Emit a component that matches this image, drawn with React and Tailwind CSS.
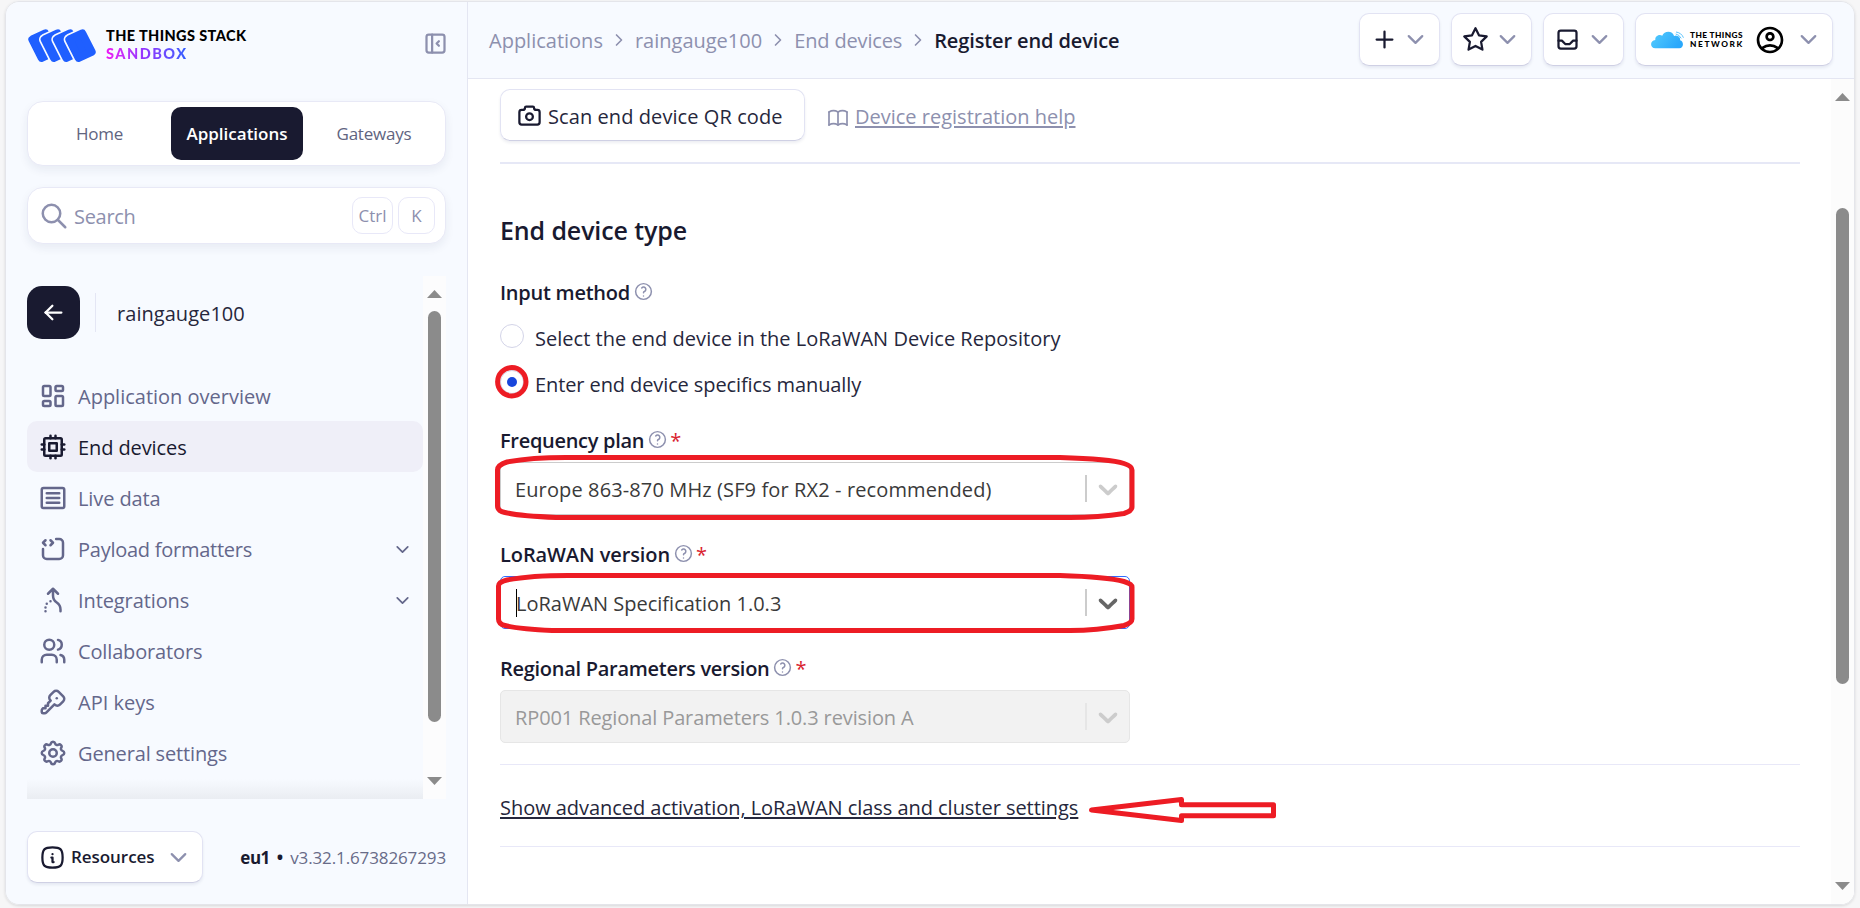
import React from "react";
import {
  TbLayoutDashboard,
  TbCpu,
  TbSourceCode,
  TbUsers,
  TbKey,
  TbSettings,
  TbLayoutSidebarLeftCollapse,
  TbSearch,
  TbInfoSquareRounded,
  TbPlus,
  TbStar,
  TbInbox,
  TbChevronDown,
  TbChevronRight,
  TbCamera,
  TbBook,
  TbHelp,
  TbArrowLeft,
} from "react-icons/tb";
import { MdOutlineAccountCircle } from "react-icons/md";

const TILE = "124,31 163,13 191,68 152,86";

function StackLogo() {
  return (
    <svg viewBox="0 0 204 98" className="h-[33px] w-[68px] shrink-0">
      {[-111, -74, -37, 0].map((dx) => (
        <g key={dx} transform={`translate(${dx} 0)`} strokeLinejoin="round">
          {dx > -111 && <polygon points={TILE} fill="#f7faff" stroke="#f7faff" strokeWidth="34" />}
          <polygon points={TILE} fill="#1f5fff" stroke="#1f5fff" strokeWidth="24" />
        </g>
      ))}
    </svg>
  );
}

function CloudLogo() {
  return (
    <svg viewBox="0 0 100 54" className="h-[18px] w-[33px] shrink-0">
      <defs>
        <linearGradient id="cloud" x1="0" x2="1" y1="0" y2="0.4">
          <stop offset="0" stopColor="#55cdfd" />
          <stop offset="1" stopColor="#2aa8fb" />
        </linearGradient>
      </defs>
      <path
        fill="url(#cloud)"
        d="M13 52C-4 52-4 28 13 27C12 14 26 9 34 14C40-2 66-2 70 15C82 12 90 19 88 28C101 31 99 52 86 52Z"
      />
      <path
        fill="none"
        stroke="#41bafc"
        strokeWidth="2.6"
        strokeLinecap="round"
        d="M77 3Q92 5 98 19M76 9Q86 11 91 21M76 15Q82 16 84 21"
      />
    </svg>
  );
}

function LiveDataIcon() {
  return (
    <svg viewBox="0 0 24 24" fill="none" stroke="currentColor" strokeWidth="2" strokeLinecap="round" strokeLinejoin="round" className="size-[30px]">
      <rect x="3" y="4" width="18" height="16" rx="1.4" />
      <path d="M7 8.2h10M7 12h10M7 15.8h10" />
    </svg>
  );
}

function MergeIcon() {
  return (
    <svg viewBox="0 0 24 24" fill="none" stroke="currentColor" strokeWidth="2" strokeLinecap="round" strokeLinejoin="round" className="size-[30px]">
      <path d="M16 7l-4 -4l-4 4M6 21v.01M6 18.01v.01M7 15.02v.01M10 13.03v.01M12 3v5.394a6.737 6.737 0 0 0 3 5.606a6.737 6.737 0 0 1 3 5.606v1.394" />
    </svg>
  );
}

const NAV = [
  { label: "Application overview", icon: <TbLayoutDashboard size={30} /> },
  { label: "End devices", icon: <TbCpu size={30} />, active: true, track: "tracking-[-0.1px]" },
  { label: "Live data", icon: <LiveDataIcon />, track: "tracking-[-0.1px]" },
  { label: "Payload formatters", icon: <TbSourceCode size={30} />, more: true, track: "tracking-[-0.25px]" },
  { label: "Integrations", icon: <MergeIcon />, more: true, track: "tracking-[-0.1px]" },
  { label: "Collaborators", icon: <TbUsers size={30} />, track: "tracking-[-0.15px]" },
  { label: "API keys", icon: <TbKey size={30} /> },
  { label: "General settings", icon: <TbSettings size={30} />, track: "tracking-[-0.15px]" },
];

function Triangle({ down }) {
  return (
    <svg viewBox="0 0 15 8" className={`h-2 w-[15px] shrink-0 ${down ? "rotate-180" : ""}`}>
      <path d="M0 8L7.5 0L15 8Z" fill="#8b8b8b" />
    </svg>
  );
}

function Sidebar() {
  return (
    <aside className="flex w-[462px] shrink-0 flex-col border-r border-[#e4e6f2] bg-[#f7faff] pl-[21px]">
      <div className="mt-[26px] flex h-[34px] w-[418px] items-center">
        <div className="ml-px"><StackLogo /></div>
        <div className="ml-[10px] flex flex-col font-[Lato] text-[14.5px] font-black">
          <span className="h-[18px] leading-[18px] tracking-[0.4px] text-black">THE THINGS STACK</span>
          <span className="h-[18px] w-[83px] bg-gradient-to-r from-[#ee10f5] via-[#8a35ff] to-[#1f5fff] bg-clip-text leading-[18px] tracking-[1.5px] text-transparent">
            SANDBOX
          </span>
        </div>
        <TbLayoutSidebarLeftCollapse size={27} className="mb-[3px] ml-auto -mr-[4px] text-[#8d90ae]" />
      </div>

      <nav className="mt-[39px] flex h-[65px] w-[419px] items-center rounded-[16px] border border-[#e8e9f6] bg-white text-[17px] text-[#61647f] shadow-[0_4px_10px_rgba(30,40,90,0.07)]">
        <span className="w-[143px] pt-px text-center tracking-[-0.2px]">Home</span>
        <span className="flex h-[53px] w-[132px] items-center justify-center rounded-[10px] bg-[#191a30] pt-px font-semibold text-white">
          Applications
        </span>
        <span className="w-[142px] pt-px text-center tracking-[-0.2px]">Gateways</span>
      </nav>

      <div className="mt-[21px] flex h-[57px] w-[419px] items-center rounded-[16px] border border-[#e8e9f6] bg-white pr-[10px] pl-[11px] text-[#8d90ae] shadow-[0_4px_10px_rgba(30,40,90,0.07)]">
        <TbSearch size={30} />
        <span className="ml-[5px] pt-[3px] text-[20px] tracking-[-0.3px]">Search</span>
        <span className="ml-auto flex h-[37px] w-[41px] items-center justify-center rounded-[10px] border border-[#e8e8f8] pt-px text-[17px]">Ctrl</span>
        <span className="ml-[5px] flex h-[37px] w-[37px] items-center justify-center rounded-[10px] border border-[#e8e8f8] pt-px text-[17px]">K</span>
      </div>

      <div className="mt-[32px] flex h-[523px] w-[419px]">
        <div className="relative flex w-[396px] flex-col pt-[10px]">
          <div className="flex h-[53px] items-center">
            <span className="flex size-[53px] items-center justify-center rounded-[15px] bg-[#191a30] text-white">
              <TbArrowLeft size={27} />
            </span>
            <span className="ml-[15px] h-[39px] w-px bg-[#e4e6f4]" />
            <span className="ml-[21px] pt-[2px] text-[20px] tracking-[0.05px] text-[#26273c]">raingauge100</span>
          </div>
          <div className="mt-[31px] flex flex-col">
            {NAV.map((n) => (
              <div
                key={n.label}
                className={`flex h-[51px] items-center rounded-[10px] pt-px pl-[11px] ${n.active ? "bg-[#efeff8] text-[#191a30]" : "text-[#64678b]"}`}
              >
                {n.icon}
                <span className={`ml-[10px] pt-[2px] text-[20px] ${n.track ?? ""}`}>{n.label}</span>
                {n.more && <TbChevronDown size={21} className="mr-[10px] ml-auto" />}
              </div>
            ))}
          </div>
          <div className="absolute inset-x-0 bottom-0 h-5 bg-gradient-to-t from-[#eaedf2] to-[#f7faff]" />
        </div>
        <div className="flex w-[23px] flex-col items-center bg-[#fcfcfd] pt-[14px] pb-[14px]">
          <Triangle />
          <span className="mt-[13px] h-[411px] w-[13px] rounded-full bg-[#8b8b8b]" />
          <span className="mt-auto flex"><Triangle down /></span>
        </div>
      </div>

      <div className="mt-8 flex h-[52px] w-[419px] items-center">
        <span className="flex h-[52px] w-[176px] items-center rounded-[10px] border border-[#e2e3f3] border-b-[#cfd0e4] bg-white pl-[11px] shadow-[0_2px_3px_rgba(30,40,90,0.08)]">
          <TbInfoSquareRounded size={27} className="text-[#191a30]" />
          <span className="ml-[5px] text-[17px] font-semibold tracking-[-0.05px] text-[#191a30]">Resources</span>
          <TbChevronDown size={27} className="ml-[10px] text-[#8d90ae]" />
        </span>
        <span className="ml-auto flex items-baseline pt-[2px] text-[17px]">
          <b className="tracking-[-0.5px] text-[#191a30]">eu1</b>
          <b className="mx-[7px] text-[#191a30]">•</b>
          <span className="tracking-[-0.12px] text-[#686b88]">v3.32.1.6738267293</span>
        </span>
      </div>
    </aside>
  );
}

function HeaderButton({ children, className }) {
  return (
    <span
      className={`flex h-[53px] items-center rounded-[10px] border border-[#e2e3f3] border-b-[#cfd0e4] bg-white shadow-[0_2px_3px_rgba(30,40,90,0.08)] ${className}`}
    >
      {children}
      <TbChevronDown size={27} className="mr-[10px] ml-auto text-[#8d90ae]" />
    </span>
  );
}

function Header() {
  return (
    <header className="flex h-[77px] shrink-0 items-center border-b border-[#e4e6f2] bg-[#f7faff] pr-[21px] pl-[21px]">
      <div className="flex items-center pt-[2px] text-[20px] text-[#8d90ae]">
        <span>Applications</span>
        <TbChevronRight size={20} className="mx-[6px] mb-[2px]" />
        <span>raingauge100</span>
        <TbChevronRight size={20} className="mx-[6px] mb-[2px]" />
        <span className="tracking-[-0.15px]">End devices</span>
        <TbChevronRight size={20} className="mx-[6px] mb-[2px]" />
        <span className="font-semibold tracking-[-0.12px] text-[#191a30]">Register end device</span>
      </div>
      <div className="mb-px ml-auto flex gap-[11px] text-[#191a30]">
        <HeaderButton className="w-[81px] pl-[11px]">
          <TbPlus size={27} />
        </HeaderButton>
        <HeaderButton className="w-[81px] pl-[10px]">
          <TbStar size={27} />
        </HeaderButton>
        <HeaderButton className="w-[81px] pl-[10px]">
          <TbInbox size={27} />
        </HeaderButton>
        <HeaderButton className="w-[198px] pl-[15px]">
          <CloudLogo />
          <span className="ml-[6px] flex w-[56px] flex-col font-[Lato] text-[8.3px] leading-[9px] font-black text-black">
            <span className="whitespace-nowrap tracking-[0.4px]">THE THINGS</span>
            <span className="tracking-[1.6px]">NETWORK</span>
          </span>
          <MdOutlineAccountCircle size={32} className="ml-[8px] text-black" />
        </HeaderButton>
      </div>
    </header>
  );
}

function Label({ children, required, track = "" }) {
  return (
    <div className="flex h-7 items-center text-[20px] font-semibold text-[#191a30]">
      <span className={`pt-[2px] ${track}`}>{children}</span>
      <TbHelp size={21} className="mb-px ml-[3px] text-[#8d90ae]" strokeWidth={1.7} />
      {required && <span className="ml-[2px] pt-[2px] font-normal text-[#d9232f]">*</span>}
    </div>
  );
}

function Select({ children, focused, disabled, track = "" }) {
  const frame = focused
    ? "border-[#2f6bff] text-[#3a3a3a]"
    : disabled
      ? "border-[#e6e6e6] bg-[#f2f2f2] text-[#999999]"
      : "border-[#cccccc] text-[#3a3a3a]";
  return (
    <div className={`mt-2 flex h-[53px] w-[630px] items-center rounded-[5px] border text-[20px] ${frame}`}>
      {focused && <span className="-mr-px ml-[15px] h-7 w-px bg-black" />}
      <span className={`pt-[2px] ${focused ? "" : "ml-[14px]"} ${track}`}>{children}</span>
      <span className={`ml-auto h-[27px] w-[2px] ${disabled ? "bg-[#e6e6e6]" : "bg-[#cccccc]"}`} />
      <svg viewBox="0 0 20 20" className={`mr-[5px] ml-[5px] size-8 ${focused ? "text-[#666666]" : "text-[#cccccc]"}`}>
        <path
          fill="currentColor"
          d="M4.516 7.548c0.436-0.446 1.043-0.481 1.576 0l3.908 3.747 3.908-3.747c0.533-0.481 1.141-0.446 1.574 0 0.436 0.445 0.408 1.197 0 1.615-0.406 0.418-4.695 4.502-4.695 4.502-0.217 0.223-0.502 0.335-0.787 0.335s-0.57-0.112-0.789-0.335c0 0-4.287-4.084-4.695-4.502s-0.436-1.17 0-1.615z"
        />
      </svg>
    </div>
  );
}

function Radio({ children, checked, track = "" }) {
  return (
    <div className="flex h-[46px] items-center">
      <span className="mb-[2px] flex size-6 items-center justify-center rounded-full border border-[#d3d4e8]">
        {checked && <span className="size-[10px] rounded-full bg-[#1846dc]" />}
      </span>
      <span className={`mt-[4px] ml-[11px] text-[20px] text-[#26273c] ${track}`}>{children}</span>
    </div>
  );
}

function Content() {
  return (
    <div className="flex flex-1 bg-white">
      <div className="flex w-[1363px] flex-col pt-[10px] pr-[31px] pl-8">
        <div className="flex h-[52px] items-center">
          <span className="flex h-[52px] w-[305px] items-center rounded-[10px] border border-[#e2e3f3] border-b-[#cfd0e4] pl-[15px] text-[20px] text-[#26273c] shadow-[0_2px_3px_rgba(30,40,90,0.08)]">
            <TbCamera size={27} className="text-[#191a30]" />
            <span className="ml-[5px] pt-[3px] whitespace-nowrap tracking-[0.08px]">Scan end device QR code</span>
          </span>
          <TbBook size={24} className="mt-[5px] ml-[21px] text-[#8d90ae]" strokeWidth={1.7} />
          <span className="mt-[4px] ml-[5px] text-[20px] text-[#8d90ae] underline decoration-2 underline-offset-[2px]">
            Device registration help
          </span>
        </div>
        <div className="mt-[21px] h-[2px] bg-[#e6e8f6]" />

        <h2 className="mt-[49px] h-[34px] text-[25px] leading-[34px] font-semibold tracking-[-0.12px] text-[#191a30]">End device type</h2>

        <div className="mt-[31px]">
          <Label track="tracking-[-0.25px]">Input method</Label>
        </div>
        <div className="mt-2">
          <Radio track="tracking-[0.03px]">Select the end device in the LoRaWAN Device Repository</Radio>
          <Radio checked track="tracking-[-0.1px]">Enter end device specifics manually</Radio>
        </div>

        <div className="mt-5">
          <Label required track="tracking-[-0.3px]">Frequency plan</Label>
          <Select track="tracking-[0.12px]">Europe 863-870 MHz (SF9 for RX2 - recommended)</Select>
        </div>
        <div className="mt-[25px]">
          <Label required track="tracking-[-0.1px]">LoRaWAN version</Label>
          <Select focused>LoRaWAN Specification 1.0.3</Select>
        </div>
        <div className="mt-[25px]">
          <Label required track="tracking-[-0.28px]">Regional Parameters version</Label>
          <Select disabled track="tracking-[-0.12px]">RP001 Regional Parameters 1.0.3 revision A</Select>
        </div>

        <div className="mt-[21px] flex h-[83px] items-center border-y border-[#e8e8f8]">
          <span className="mt-[5px] text-[20px] tracking-[-0.04px] text-[#26273c] underline decoration-2 underline-offset-[2px]">
            Show advanced activation, LoRaWAN class and cluster settings
          </span>
        </div>
      </div>
      <div className="flex w-[23px] flex-col items-center bg-[#fcfcfc] pt-[14px] pb-[14px]">
        <Triangle />
        <span className="mt-[107px] h-[476px] w-[13px] rounded-full bg-[#8b8b8b]" />
        <span className="mt-auto flex"><Triangle down /></span>
      </div>
    </div>
  );
}

function Annotations() {
  return (
    <svg viewBox="0 0 1860 908" className="pointer-events-none absolute top-0 left-0 h-[908px] w-[1860px]" fill="none" stroke="#ed1c24" strokeWidth="5" strokeLinejoin="round">
      <circle cx="511.8" cy="381.8" r="14.2" />
      <path d="M566 457.5H1060C1095 458.5 1115 460.5 1124 463.5Q1132 466 1132 470V507Q1132 511 1124 513.5C1105 516.5 1085 517.5 1070 517.5H556C530 516.5 515 515 505 512.5Q497.5 511 497.5 506V470Q497.5 465 507 462C520 459.5 545 457.5 566 457.5Z" />
      <path d="M568 575.5H1060C1095 576.5 1115 579 1124 581.5Q1132 584 1132 587V619Q1132 623 1124 625.5C1105 629 1085 630.5 1070 630.5H552C530 629.5 515 628 505 625.5Q498.5 624 498.5 619V586Q498.5 582 507 580C520 577.5 545 575.5 568 575.5Z" />
      <path d="M1091.5 810L1181.5 799.5V804.7H1273.5V815.7H1181.5V820.5Z" />
    </svg>
  );
}

export default function App() {
  return (
    <div className="relative h-[908px] w-[1860px] overflow-hidden bg-[#f6f6f7] pt-px pl-[5px] font-['Open_Sans',sans-serif]">
      <div className="flex h-[904px] w-[1850px] overflow-hidden rounded-[14px] border border-[#e4e5ea] shadow-[0_1px_3px_rgba(0,0,0,0.12)]">
        <Sidebar />
        <main className="flex min-w-0 flex-1 flex-col">
          <Header />
          <Content />
        </main>
      </div>
      <Annotations />
    </div>
  );
}
